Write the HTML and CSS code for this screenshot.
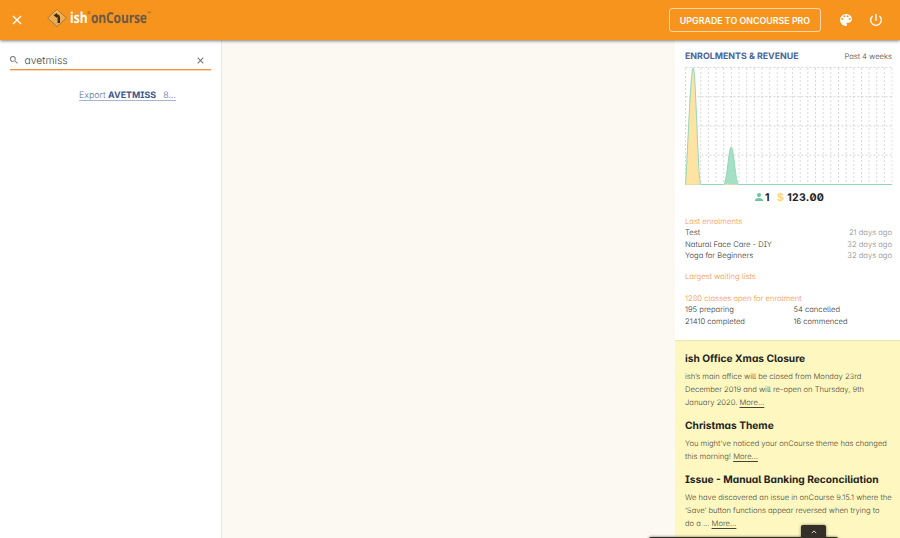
FILE: index.html
```html
<!DOCTYPE html>
<html lang="en">
<head>
<meta charset="utf-8">
<title>onCourse</title>
<link rel="stylesheet" href="styles.css">
</head>
<body>
<header class="topbar">
  <svg class="close" viewBox="0 0 10 10"><path d="M1 1l8 8M9 1L1 9"/></svg>
  <div class="brand">
    <svg class="sign" viewBox="0 0 20 20"><defs><linearGradient id="g" x2="0" y2="1"><stop stop-color="#ffb143"/><stop offset="1" stop-color="#dfa560"/></linearGradient></defs><path d="M10 1.200L19.300 10l-9.300 8.800L.7 10z" fill="url(#g)" stroke="#a07a40" stroke-width=".9"/><path d="M11.800 15V9.500Q11.800 7.700 9.500 7.500" fill="none" stroke="#3a2c19" stroke-width="2.400"/><path d="M10 5v5L6.500 7.200z" fill="#3a2c19"/></svg>
    <span class="ish">ish</span><span class="reg">®</span><span class="name">onCourse</span><span class="tm">™</span>
  </div>
  <button class="upgrade">UPGRADE TO ONCOURSE PRO</button>
  <svg class="palette" viewBox="3 3 18 18"><path d="M12 3a9 9 0 0 0 0 18c.83 0 1.500-.67 1.500-1.500 0-.39-.15-.74-.39-1.010-.23-.26-.38-.61-.38-.99 0-.83.67-1.500 1.500-1.500H16c2.760 0 5-2.240 5-5 0-4.420-4.030-8-9-8zm-5.500 9a1.500 1.500 0 1 1 0-3 1.500 1.500 0 0 1 0 3zm3-4a1.500 1.500 0 1 1 0-3 1.500 1.500 0 0 1 0 3zm5 0a1.500 1.500 0 1 1 0-3 1.500 1.500 0 0 1 0 3zm3 4a1.500 1.500 0 1 1 0-3 1.500 1.500 0 0 1 0 3z"/></svg>
  <svg class="power" viewBox="3 3 18 18"><path d="M13 3h-2v10h2V3zm4.830 2.170-1.420 1.420A6.920 6.920 0 0 1 19 12a7 7 0 1 1-11.420-5.420L6.170 5.170A8.932 8.932 0 0 0 3 12a9 9 0 0 0 18 0c0-2.740-1.230-5.180-3.170-6.830z"/></svg>
</header>
<div class="body">
  <aside class="left">
    <div class="search">
      <svg class="mag" viewBox="3 3 18 18"><path d="M15.500 14h-.79l-.28-.27A6.471 6.471 0 0 0 16 9.500 6.500 6.500 0 1 0 9.500 16c1.610 0 3.090-.59 4.230-1.570l.27.28v.79l5 4.990L20.490 19l-4.990-5zm-6 0a4.500 4.500 0 1 1 0-9 4.500 4.500 0 0 1 0 9z"/></svg>
      <span class="query">avetmiss</span>
      <svg class="clear" viewBox="0 0 10 10"><path d="M1 1l8 8M9 1L1 9"/></svg>
    </div>
    <a class="result"><span>Export <b>AVETMISS</b></span><span class="code">8...</span></a>
  </aside>
  <main class="canvas"></main>
  <aside class="right">
    <section class="stats">
      <div class="stats-head"><h2>ENROLMENTS &amp; REVENUE</h2><span class="period">Past 4 weeks</span></div>
      <svg class="chart" viewBox="0 0 208 119">
        <defs><pattern id="v" width="7.650" height="4" patternUnits="userSpaceOnUse" x="0" y="1"><path d="M.5 0v2" stroke="#d3d3d3" stroke-width=".9"/></pattern></defs>
        <rect y="1" width="207.500" height="117" fill="url(#v)"/>
        <path d="M.5 .5H207M.5 29.700H207M.5 59H207M.5 88.200H207" stroke="#d0d0d0" stroke-width=".9" stroke-dasharray="2 2"/>
        <path d="M.5 117.500C3 80 5.600 1 8.200 1S13 117.500 15.800 117.500z" fill="#ffe3a3"/>
        <path d="M38.500 117.500C42 117.500 43.600 80 46.200 80S50.500 117.500 53.800 117.500z" fill="#a5dfc6"/>
        <path d="M.5 117.500C3 80 5.600 1 8.200 1S13 117.500 15.800 117.500H38.500C42 117.500 43.600 80 46.200 80S50.500 117.500 53.800 117.500H207" fill="none" stroke="#91d7b8" stroke-width="1"/>
        <path d="M1 117.500H15M39 117.500H53" stroke="#d9d898" stroke-width=".8"/>
      </svg>
      <div class="totals">
        <svg class="person" viewBox="4 4 16 16"><path d="M12 12a4 4 0 1 0 0-8 4 4 0 0 0 0 8zm0 2c-2.670 0-8 1.340-8 4v2h16v-2c0-2.660-5.330-4-8-4z"/></svg>
        <span class="count">1</span><span class="dollar">$</span><span class="money">123.00</span>
      </div>
      <h3>Last enrolments</h3>
      <div class="row"><span>Test</span><time>21 days ago</time></div>
      <div class="row"><span>Natural Face Care - DIY</span><time>32 days ago</time></div>
      <div class="row"><span>Yoga for Beginners</span><time>32 days ago</time></div>
      <h3 class="gap">Largest waiting lists</h3>
      <h3 class="gap">1280 classes open for enrolment</h3>
      <div class="pair"><span>195 preparing</span><span>54 cancelled</span></div>
      <div class="pair"><span>21410 completed</span><span>16 commenced</span></div>
    </section>
    <section class="news">
      <article><h4>ish Office Xmas Closure</h4><p>ish’s main office will be closed from Monday 23rd<br>December 2019 and will re-open on Thursday, 9th<br>January 2020. <a>More...</a></p></article>
      <article><h4>Christmas Theme</h4><p>You might’ve noticed your onCourse theme has changed<br>this morning! <a>More...</a></p></article>
      <article><h4>Issue - Manual Banking Reconciliation</h4><p>We have discovered an issue in onCourse 9.15.1 where the<br>‘Save’ button functions appear reversed when trying to<br>do a ... <a>More...</a></p></article>
    </section>
  </aside>
</div>
<div class="drawer"></div>
<div class="drawer-tab"><svg viewBox="0 0 8 5"><path d="M1 4l3-3 3 3"/></svg></div>
</body>
</html>
```

FILE: styles.css
```css
* { box-sizing: border-box; }
body { margin: 0; width: 900px; height: 538px; overflow: hidden; position: relative; font-family: Inter, sans-serif; font-feature-settings: "cv05", "cv08", "cv11"; text-rendering: geometricPrecision; color: #666; background: #fcf9f2; }
svg { display: block; flex: none; }
h2, h3, h4, p { margin: 0; }
.topbar { height: 40px; background: #f7941e; display: flex; align-items: center; position: relative; z-index: 2; padding: 0 18px 0 12px; box-shadow: 0 1px 3px rgba(0,0,0,.5); }
.close { width: 10px; height: 10px; stroke: #fff; stroke-width: 1.4; fill: none; }
.brand { display: flex; align-items: center; margin-left: 25px; height: 22px; font-family: "Open Sans", sans-serif; font-weight: 700; font-size: 15px; line-height: 22px; margin-top: -5px; white-space: nowrap; width: 106px; }
.sign { width: 20px; height: 20px; margin-right: 3px; }
.ish, .name { transform: scaleX(.8); transform-origin: 0 50%; flex: none; }
.ish { color: #fff; width: 17px; }
.reg { font-size: 4px; width: 4px; line-height: 4px; align-self: flex-start; margin-top: 5px; color: #8a6030; }
.name { color: #6b5a48; width: 56px; letter-spacing: -.15px; }
.tm { color: #6b5a48; font-size: 5px; line-height: 5px; align-self: flex-start; margin-top: 5px; }
.upgrade { margin: 0 19px 0 auto; width: 152px; height: 24px; padding: 0; border: 1px solid #fcd7ab; border-radius: 3px; background: none; color: #fff; font: 600 8.850px Inter, sans-serif; white-space: nowrap; }
.palette { width: 12px; height: 12px; fill: #fff; margin-right: 18px; }
.power { width: 12px; height: 12px; fill: #fff; }
.body { display: flex; height: 498px; }
.left { width: 222px; background: #fff; border-right: 1px solid #e9e6df; padding: 10px 10px 0; }
.search { height: 20px; border-bottom: 1px solid #f6923d; display: flex; align-items: center; box-shadow: 0 1px 0 #fbd5b4; }
.mag { width: 8px; height: 8px; fill: #777; }
.query { font-size: 10.400px; margin-left: 6.500px; margin-top: 1px; color: #444; font-weight: 300; }
.clear { width: 7px; height: 7px; margin: 1px 7px 0 auto; stroke: #777; stroke-width: 1.500; fill: none; }
.result { display: flex; justify-content: space-between; width: 97px; height: 12px; margin: 19px 0 0 69px; border-bottom: 1px solid #a9b5cc; font-size: 8.900px; line-height: 13px; font-weight: 300; color: #5e74a4; white-space: nowrap; }
.result b { font-weight: 700; color: #3b568f; }
.canvas { flex: 1; }
.right { width: 225px; background: #fff; }
.stats { height: 300px; padding: 9px 8px 0 10px; }
.stats-head { display: flex; justify-content: space-between; align-items: center; height: 14px; white-space: nowrap; }
h2 { font-size: 8.850px; line-height: 12px; font-weight: 700; color: #4a649b; padding-top: 1px; }
.period { font-size: 7.650px; font-weight: 300; color: #444; margin-top: 1px; }
.chart { width: 208px; height: 119px; margin-top: 4px; }
.totals { display: flex; align-items: center; height: 14px; margin: 4px 0 0 70px; font-size: 10.500px; font-weight: 700; letter-spacing: .35px; color: #222; font-feature-settings: "zero"; }
.person { width: 8px; height: 8px; fill: #69c69f; }
.count { margin-left: 2px; }
.dollar { color: #ffd56e; margin-left: 7px; }
.money { margin-left: 3px; }
h3 { font-size: 7.650px; font-weight: 300; line-height: 11.400px; color: #f98f44; margin-top: 11.700px; white-space: nowrap; }
h3.gap { margin-top: 10px; }
.row, .pair { display: flex; font-size: 7.650px; font-weight: 300; line-height: 11.400px; color: #303030; white-space: nowrap; }
.row { justify-content: space-between; }
.row time { color: #888; }
.pair span { flex: 0 0 108.500px; }
.news { height: 198px; background: #fef8c0; border-top: 1px solid #eae4b4; padding: 11px 0 0 10px; white-space: nowrap; overflow: hidden; }
h4 { font-size: 10.200px; line-height: 15px; font-weight: 700; color: #222; }
p { font-size: 7.620px; font-weight: 300; line-height: 13.200px; color: #45433a; margin-top: 2.500px; }
p a { text-decoration: underline; text-underline-offset: 2px; text-decoration-thickness: .6px; }
article { margin-bottom: 10px; }
.drawer { position: absolute; left: 649px; top: 537px; width: 189px; height: 4px; background: #302b25; border-radius: 2px 2px 0 0; box-shadow: 0 0 3px rgba(0,0,0,.6); z-index: 3; }
.drawer-tab { position: absolute; left: 801px; top: 525px; width: 25px; height: 14px; background: #352f29; border-radius: 2px 2px 0 0; box-shadow: 0 0 3px rgba(0,0,0,.5); z-index: 3; display: flex; justify-content: center; padding-top: 5px; }
.drawer-tab svg { width: 6px; height: 4px; stroke: #ddd; stroke-width: 1.300; fill: none; }
```
